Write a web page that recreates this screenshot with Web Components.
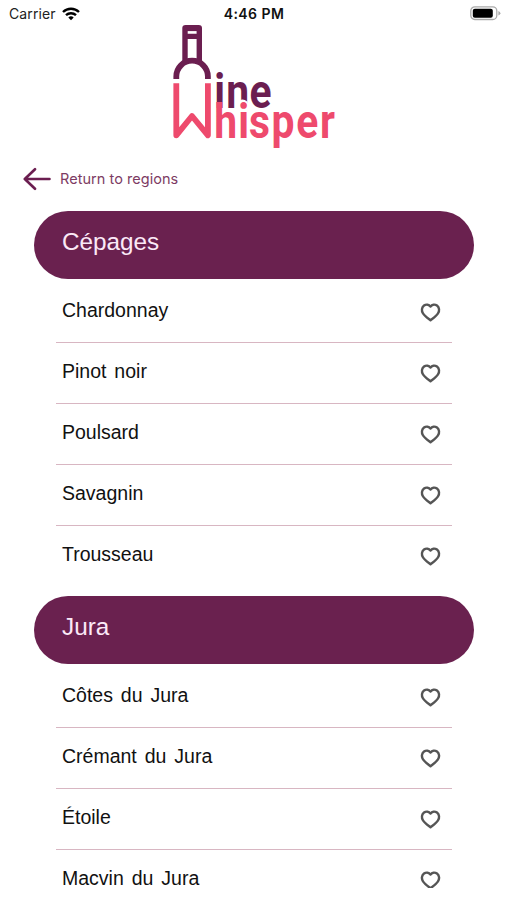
<!DOCTYPE html>
<html lang="en">
<head>
<meta charset="utf-8">
<title>Wine Whisper</title>
<style>
html,body{margin:0;height:900px;overflow:hidden;background:#fff}
</style>
</head>
<body>
<wine-app></wine-app>
<script>
const define = (name, html, setup) => customElements.define(name, class extends HTMLElement {
  constructor() {
    super();
    this.attachShadow({mode: 'open'}).innerHTML = html;
  }
  connectedCallback() { if (setup) setup(this, this.shadowRoot); }
});

define('status-bar', `
<style>
:host{display:grid;grid-template-columns:1fr auto 1fr;align-items:center;height:25px;padding:2px 6px 0 9px;box-sizing:border-box;font:14px/23px Inter,sans-serif;color:#222}
.left{display:flex;align-items:center;gap:6px}
.carrier{letter-spacing:.1px}
.time{font-weight:600;font-size:14px;color:#111;letter-spacing:.45px;margin:0 1px 0 -1px}
.right{justify-self:end;display:flex}
svg{display:block}
</style>
<div class="left"><span class="carrier">Carrier</span>
<svg width="18" height="14" viewBox="0 0 18 14" fill="none" stroke="#000" stroke-width="2.4"><path d="M1 5a11.6 11.6 0 0 1 16 0M4 8.2a7.2 7.2 0 0 1 10 0"/><path d="M9 13.3 6.3 10.6a3.9 3.9 0 0 1 5.4 0z" fill="#000" stroke="none"/></svg></div>
<span class="time">4:46 PM</span>
<div class="right"><svg width="31" height="15" viewBox="0 0 31 15"><rect x=".8" y=".9" width="26" height="12.6" rx="4" fill="#fff" stroke="#aaa" stroke-width="1.3"/><rect x="2.8" y="2.8" width="20" height="9" rx="2" fill="#000"/><path d="M28.4 5v4.6q2-.8 2-2.3t-2-2.3z" fill="#aaa"/></svg></div>`);

define('wine-logo', `
<style>
:host{display:flex;justify-content:center;height:130px}
svg{display:block;overflow:visible}
text{font-family:Roboto,sans-serif;font-weight:700}
</style>
<svg width="165" height="130" viewBox="171 25 165 130">
<g fill="none" stroke="#6b1e50">
<path d="M185 61V28q0-.4.6-.4h13.1q.6 0 .6.4v33M185 36.4h14" stroke-width="5.4"/>
<path d="M187 29.4h10" stroke-width="3.4"/>
<path d="M176.3 79v-2.5a15.8 15.8 0 0 1 31.6 0V79" stroke-width="5.8"/>
</g>
<path d="M176.3 83.2V135.3L192 116l15.9 19.3V83.2" fill="none" stroke="#ee4a6d" stroke-width="5.8" stroke-linejoin="round"/>
<text transform="scale(.86 1)" x="249.2 263 290" y="108" font-size="47.5" fill="#6b1e50">ine</text>
<circle cx="242.5" cy="105.5" r="6" fill="#fff"/>
<text transform="scale(.86 1)" x="249 277 289.5 315.8 344.6 372" y="138" font-size="47.5" fill="#ee4a6d">hisper</text>
</svg>`);

define('back-link', `
<style>
:host{display:flex;align-items:center;gap:9px;height:47px;padding-left:23px;font:14.5px/47px Inter,sans-serif;letter-spacing:.04px;color:#7d3b63}
svg{display:block}
</style>
<svg width="28" height="24" viewBox="0 0 28 24" fill="none" stroke="#6b1e50" stroke-width="2.6" stroke-linecap="round" stroke-linejoin="round"><path d="M12 2.2 1.8 12 12 21.8M2 12h24.5"/></svg>
<span><slot></slot></span>`);

define('heart-icon', `
<style>:host{display:block;width:22px;height:20px}svg{display:block}</style>
<svg width="22" height="20" viewBox="0 0 22 20" fill="none" stroke="#555" stroke-width="2.4" stroke-linejoin="round"><path d="M11.5 3.6C9.9 1.4 7.2 1 5 2.5 2.6 4.3 2.3 7.8 4 10.3c1.8 2.7 4.9 4.9 7.5 7 2.6-2.1 5.7-4.3 7.5-7 1.7-2.5 1.4-6-1-7.8C15.8 1 13.1 1.4 11.5 3.6z"/></svg>`);

define('wine-row', `
<style>
:host{display:flex;justify-content:space-between;align-items:center;height:61px;box-sizing:border-box;margin:0 55px 0 56px;padding:0 11px 5px 6px;border-bottom:1px solid #d8b6c2;font:19.5px/24px "Liberation Sans",sans-serif;word-spacing:2.5px;color:#111}
:host(:last-child){border-color:transparent}
heart-icon{margin-top:7px}
</style>
<span><slot></slot></span><heart-icon></heart-icon>`);

define('wine-section', `
<style>
:host{display:block;margin-bottom:9px}
h2{margin:0 33px 3px 34px;height:68px;box-sizing:border-box;padding:15px 28px 0;border-radius:34px;background:#6a214f;color:#fbe9f7;font:24.3px/32px "Liberation Sans",sans-serif}
</style>
<h2></h2><slot></slot>`, (el, root) => { root.querySelector('h2').textContent = el.getAttribute('heading'); });

define('wine-app', `
<style>
:host{display:block;width:507px;height:888px;overflow:hidden;background:#fff}
back-link{margin-bottom:9px}
</style>
<status-bar></status-bar>
<wine-logo></wine-logo>
<back-link>Return to regions</back-link>
<wine-section heading="Cépages"><wine-row>Chardonnay</wine-row><wine-row>Pinot noir</wine-row><wine-row>Poulsard</wine-row><wine-row>Savagnin</wine-row><wine-row>Trousseau</wine-row></wine-section>
<wine-section heading="Jura"><wine-row>Côtes du Jura</wine-row><wine-row>Crémant du Jura</wine-row><wine-row>Étoile</wine-row><wine-row>Macvin du Jura</wine-row><wine-row></wine-row></wine-section>`);
</script>
</body>
</html>
